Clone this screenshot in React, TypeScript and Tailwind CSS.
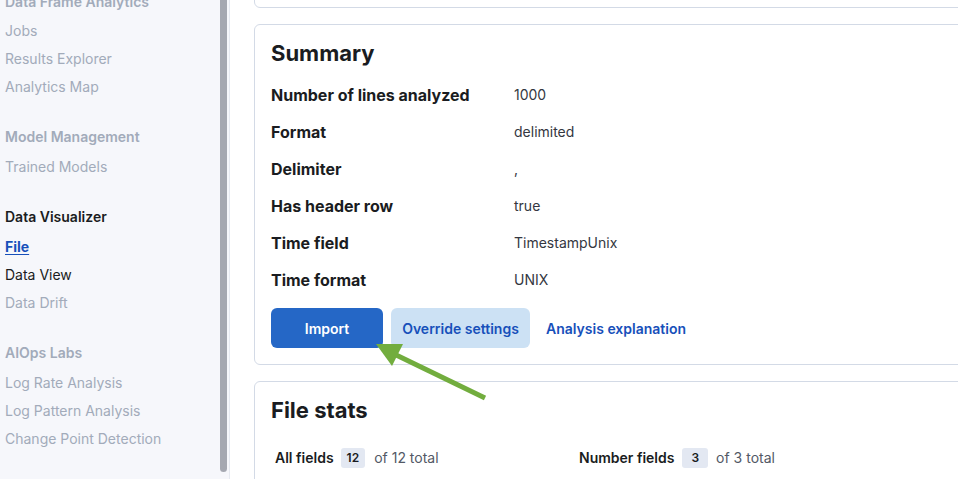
import React from "react";

const font = { fontFamily: "Inter, 'Noto Sans', sans-serif" };

function NavHeader({ children, dark }: { children: React.ReactNode; dark?: boolean }) {
  return (
    <div className={`h-[28px] flex items-center text-[14px] font-semibold ${dark ? "text-[#1a1c21]" : "text-[#a2abba]"}`}>
      {children}
    </div>
  );
}

function NavItem({ children, kind }: { children: React.ReactNode; kind?: "active" | "dark" }) {
  const cls =
    kind === "active"
      ? "text-[#1750ba] font-bold underline underline-offset-2"
      : kind === "dark"
      ? "text-[#1a1c21]"
      : "text-[#a2abba]";
  return <div className={`h-[28px] flex items-center text-[14px] ${cls}`}>{children}</div>;
}

function Row({ label, value }: { label: string; value: string }) {
  return (
    <div className="h-[37px] flex items-center">
      <div className="w-[243px] text-[16px] font-bold text-[#1a1c21]">{label}</div>
      <div className="text-[14px] text-[#343741]">{value}</div>
    </div>
  );
}

export default function App() {
  return (
    <div style={font} className="relative w-[958px] h-[479px] overflow-hidden flex bg-white">
      {/* Sidebar */}
      <div className="relative w-[230px] h-full bg-[#f6f7fb] border-r border-[#e6e9f0] shrink-0">
        <div className="pl-[5px] pt-0 -mt-[13px]">
          <NavHeader>Data Frame Analytics</NavHeader>
          <div className="mt-[1px]">
            <NavItem>Jobs</NavItem>
            <NavItem>Results Explorer</NavItem>
            <NavItem>Analytics Map</NavItem>
          </div>
          <div className="mt-[22px]">
            <NavHeader>Model Management</NavHeader>
          </div>
          <div className="mt-[2px]">
            <NavItem>Trained Models</NavItem>
          </div>
          <div className="mt-[22px]">
            <NavHeader dark>Data Visualizer</NavHeader>
          </div>
          <div className="mt-[2px]">
            <NavItem kind="active">File</NavItem>
            <NavItem kind="dark">Data View</NavItem>
            <NavItem>Data Drift</NavItem>
          </div>
          <div className="mt-[22px]">
            <NavHeader>AIOps Labs</NavHeader>
          </div>
          <div className="mt-[2px]">
            <NavItem>Log Rate Analysis</NavItem>
            <NavItem>Log Pattern Analysis</NavItem>
            <NavItem>Change Point Detection</NavItem>
          </div>
        </div>
        <div className="absolute right-[2px] top-0 w-[7px] h-[472px] bg-[#a5a8b1] rounded-b-[4px]" />
      </div>

      {/* Main */}
      <div className="flex-1 pl-[24px] flex flex-col gap-[16px] -mt-[17px]">
        <div className="w-[760px] h-[25px] border border-[#d3dae6] rounded-[6px] bg-white shrink-0" />

        <div className="w-[760px] border border-[#d3dae6] rounded-[6px] bg-white px-[16px] pt-[12px] pb-[16px] shrink-0">
          <div className="h-[32px] flex items-center text-[22px] font-bold text-[#1a1c21]">Summary</div>
          <div className="mt-[7px]">
            <Row label="Number of lines analyzed" value="1000" />
            <Row label="Format" value="delimited" />
            <Row label="Delimiter" value="," />
            <Row label="Has header row" value="true" />
            <Row label="Time field" value="TimestampUnix" />
            <Row label="Time format" value="UNIX" />
          </div>
          <div className="mt-[10px] flex items-center gap-[8px]">
            <button className="w-[112px] h-[40px] rounded-[6px] bg-[#2567c6] text-white text-[14px] font-semibold">
              Import
            </button>
            <button className="w-[139px] h-[40px] rounded-[6px] bg-[#cce1f4] text-[#1750ba] text-[14px] font-semibold">
              Override settings
            </button>
            <button className="h-[40px] px-[8px] text-[#1750ba] text-[14px] font-semibold">
              Analysis explanation
            </button>
          </div>
        </div>

        <div className="w-[760px] h-[200px] border border-[#d3dae6] rounded-[6px] bg-white px-[16px] pt-[12px] shrink-0">
          <div className="h-[32px] flex items-center text-[22px] font-bold text-[#1a1c21]">File stats</div>
          <div className="mt-[21px] flex items-center text-[14px] pl-[4px]">
            <div className="w-[304px] flex items-center">
              <span className="font-semibold text-[#1a1c21]">All fields</span>
              <span className="ml-[7px] px-[6px] h-[20px] flex items-center rounded-[3px] bg-[#e3e8f2] text-[12px] font-semibold text-[#1a1c21]">12</span>
              <span className="ml-[9px] text-[#535966]">of 12 total</span>
            </div>
            <div className="flex items-center">
              <span className="font-semibold text-[#1a1c21]">Number fields</span>
              <span className="ml-[8px] px-[9px] h-[20px] flex items-center rounded-[3px] bg-[#e3e8f2] text-[12px] font-semibold text-[#1a1c21]">3</span>
              <span className="ml-[8px] text-[#535966]">of 3 total</span>
            </div>
          </div>
        </div>
      </div>

      {/* Arrow annotation */}
      <svg className="absolute left-0 top-0 pointer-events-none" width="958" height="479">
        <line x1="485" y1="398" x2="392" y2="353" stroke="#72ad3e" strokeWidth="5" strokeLinecap="butt" />
        <polygon points="376,344 403,344 392,366" fill="#72ad3e" />
      </svg>
    </div>
  );
}
